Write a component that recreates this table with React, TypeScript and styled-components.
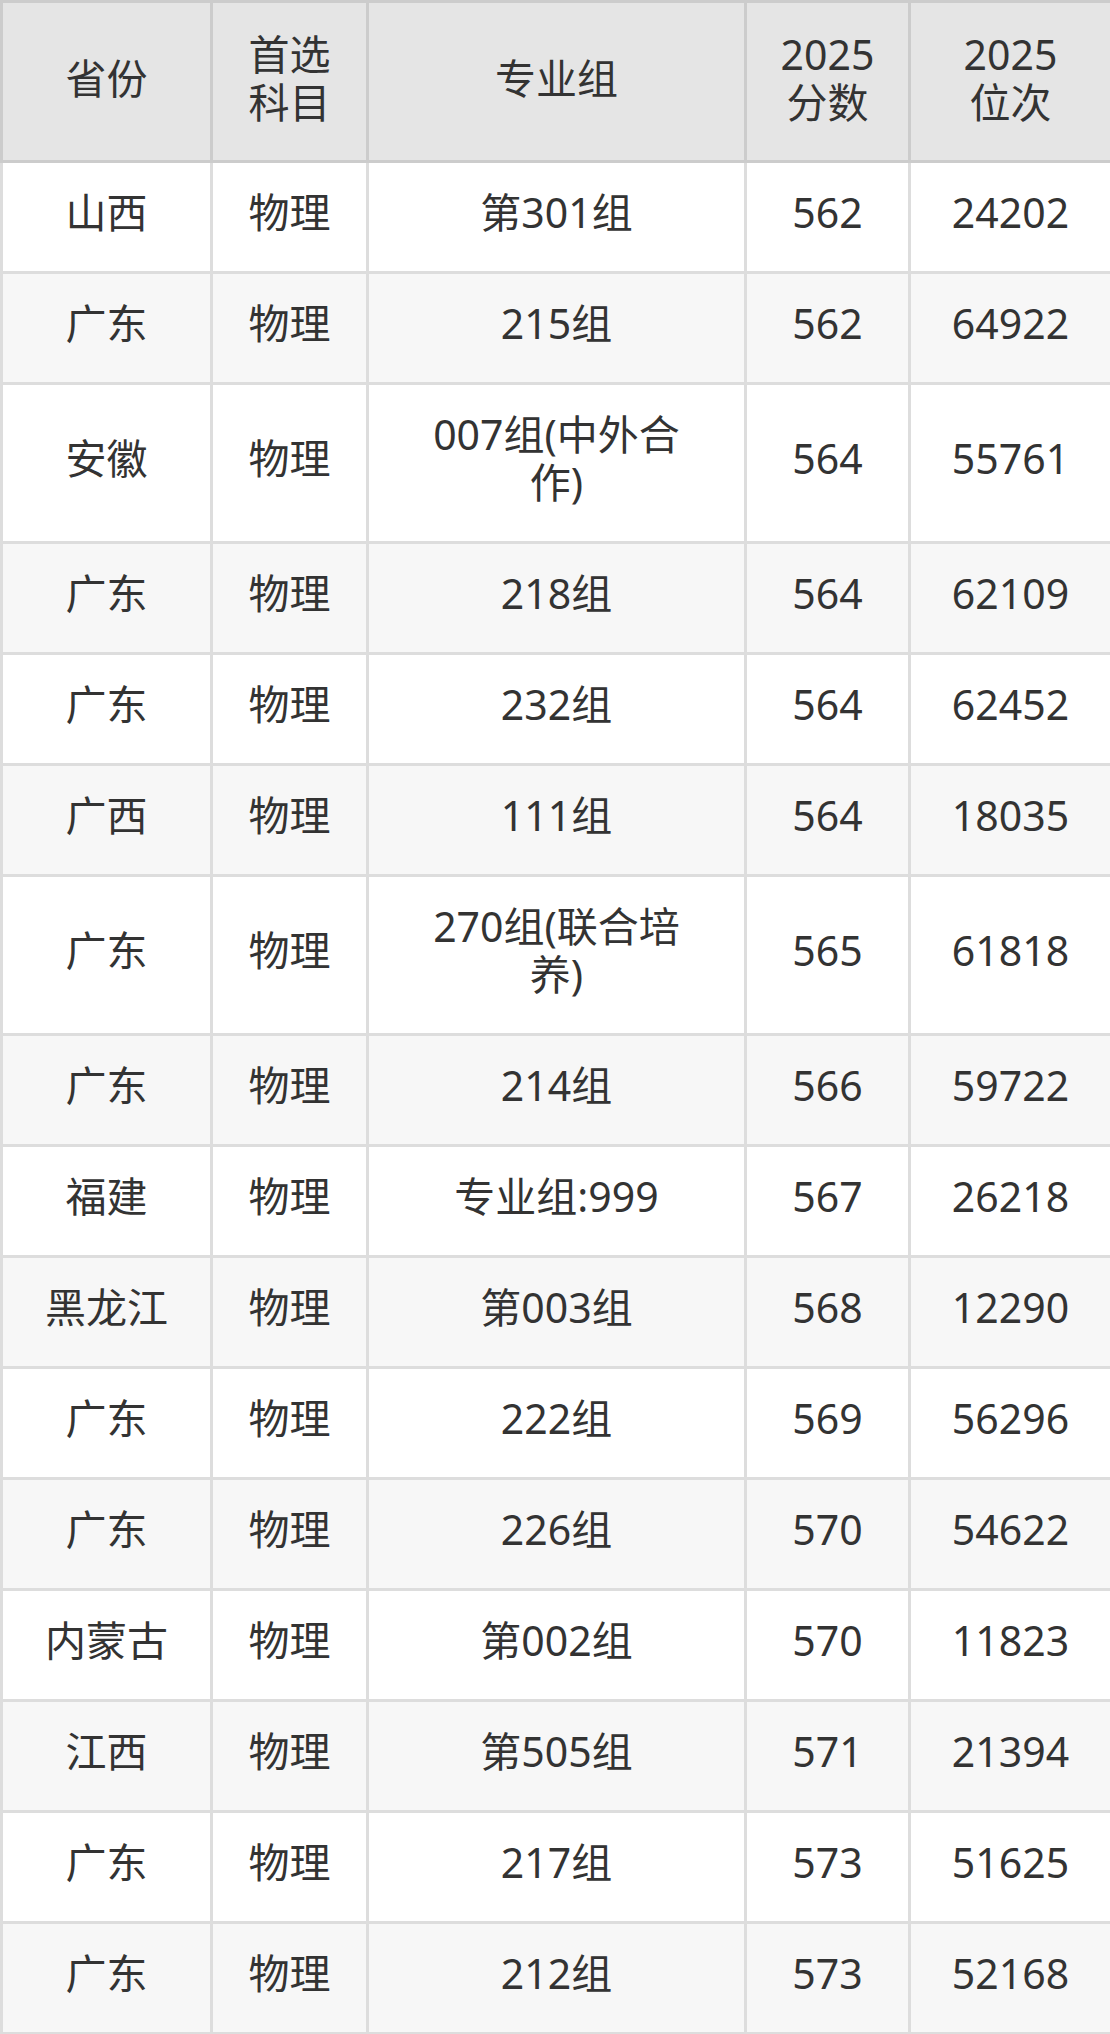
import React from "react";
import styled, { createGlobalStyle } from "styled-components";

const GlobalStyle = createGlobalStyle`
  html, body {
    margin: 0;
    padding: 0;
    background: #ffffff;
  }
  body {
    font-family: "Noto Sans", "Noto Sans CJK SC", sans-serif;
  }
`;

const Table = styled.table`
  width: 1110px;
  table-layout: fixed;
  border-collapse: collapse;
  font-family: "Noto Sans", "Noto Sans CJK SC", sans-serif;
  font-size: 41px;
  line-height: 48px;
  color: #333333;
  text-align: center;
`;

const HeadCell = styled.th<{ $wide?: boolean }>`
  background: #e5e5e5;
  border: 3px solid #cccccc;
  padding: 27px ${(p) => (p.$wide ? "44px" : "33px")} 34px;
  font-weight: 400;
  vertical-align: middle;
`;

const Row = styled.tr<{ $alt: boolean }>`
  background: ${(p) => (p.$alt ? "#f7f7f7" : "#ffffff")};
`;

const Cell = styled.td<{ $wide?: boolean }>`
  border: 3px solid #dddddd;
  padding: 25px ${(p) => (p.$wide ? "44px" : "12px")} 35px;
  vertical-align: middle;
`;

type Item = [string, string, string, string, string];

const rows: Item[] = [
  ["山西", "物理", "第301组", "562", "24202"],
  ["广东", "物理", "215组", "562", "64922"],
  ["安徽", "物理", "007组(中外合作)", "564", "55761"],
  ["广东", "物理", "218组", "564", "62109"],
  ["广东", "物理", "232组", "564", "62452"],
  ["广西", "物理", "111组", "564", "18035"],
  ["广东", "物理", "270组(联合培养)", "565", "61818"],
  ["广东", "物理", "214组", "566", "59722"],
  ["福建", "物理", "专业组:999", "567", "26218"],
  ["黑龙江", "物理", "第003组", "568", "12290"],
  ["广东", "物理", "222组", "569", "56296"],
  ["广东", "物理", "226组", "570", "54622"],
  ["内蒙古", "物理", "第002组", "570", "11823"],
  ["江西", "物理", "第505组", "571", "21394"],
  ["广东", "物理", "217组", "573", "51625"],
  ["广东", "物理", "212组", "573", "52168"],
];

export default function App() {
  return (
    <>
      <GlobalStyle />
      <Table>
        <colgroup>
          <col style={{ width: 210 }} />
          <col style={{ width: 156 }} />
          <col style={{ width: 378 }} />
          <col style={{ width: 164 }} />
          <col style={{ width: 202 }} />
        </colgroup>
        <thead>
          <tr>
            <HeadCell>省份</HeadCell>
            <HeadCell>首选科目</HeadCell>
            <HeadCell $wide>专业组</HeadCell>
            <HeadCell>2025分数</HeadCell>
            <HeadCell>2025位次</HeadCell>
          </tr>
        </thead>
        <tbody>
          {rows.map((r, i) => (
            <Row key={i} $alt={i % 2 === 1}>
              <Cell>{r[0]}</Cell>
              <Cell>{r[1]}</Cell>
              <Cell $wide>{r[2]}</Cell>
              <Cell>{r[3]}</Cell>
              <Cell>{r[4]}</Cell>
            </Row>
          ))}
        </tbody>
      </Table>
    </>
  );
}
